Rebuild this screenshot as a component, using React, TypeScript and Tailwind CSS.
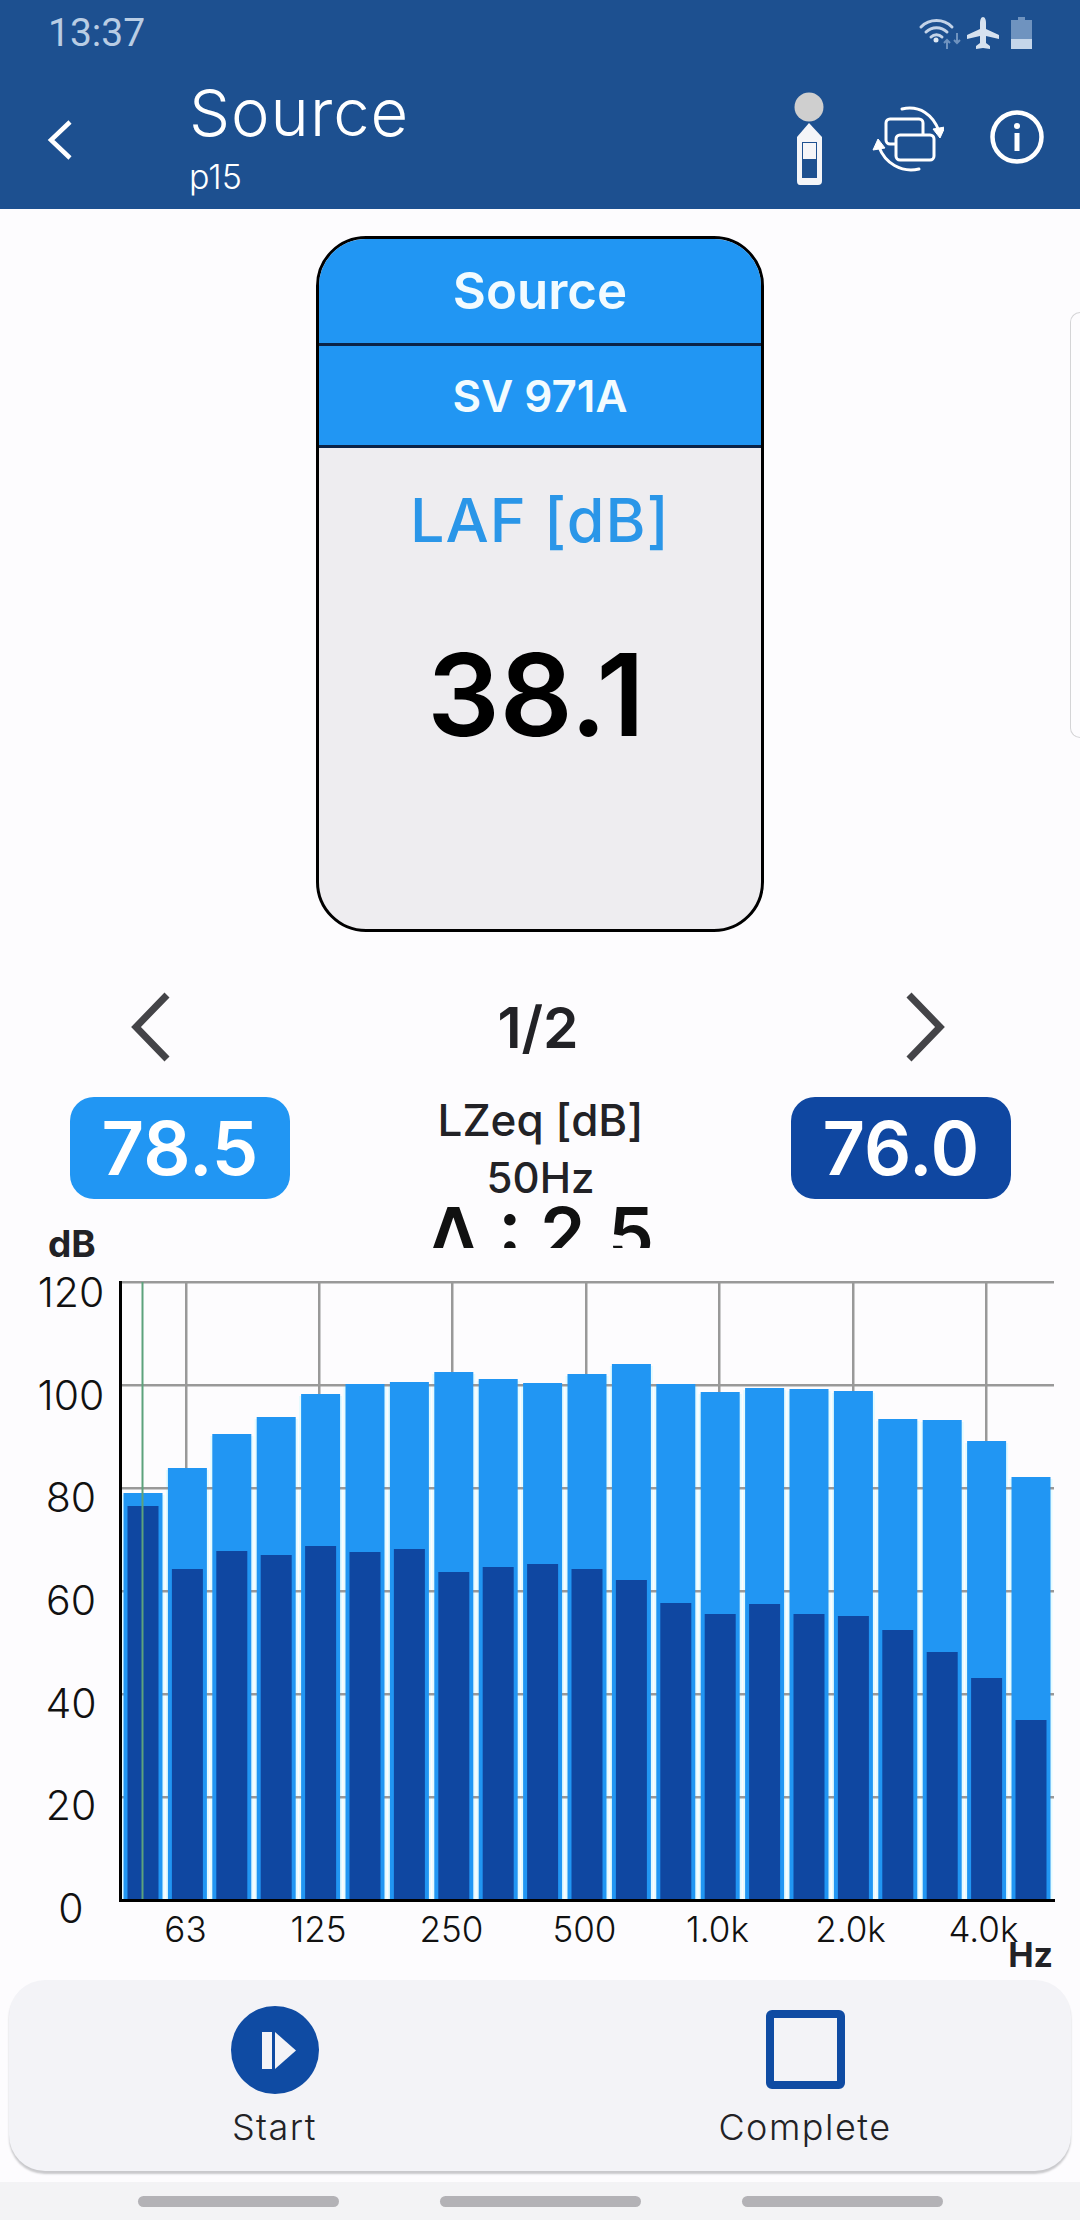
const FONT = "font-['Inter','Noto_Sans',sans-serif]"

// tops of the bars in chart pixels, [light, dark]
const bars = [
  [1493, 1506], [1468, 1569], [1434, 1551], [1417, 1555], [1394, 1546], [1384, 1552], [1382, 1549],
  [1372, 1572], [1379, 1567], [1383, 1564], [1374, 1569], [1364, 1580], [1384, 1603], [1392, 1614],
  [1388, 1604], [1389, 1614], [1391, 1616], [1419, 1630], [1420, 1652], [1441, 1678], [1477, 1720]
]

const yLabels = ['120', '100', '80', '60', '40', '20', '0']
const xLabels = ['63', '125', '250', '500', '1.0k', '2.0k', '4.0k']
const gridY = [1282, 1385, 1488, 1591, 1694, 1797]
const gridX = [186, 319, 452, 586, 719, 853, 986]
const BASE = 1900

const StatusIcons = () => (
  <svg width="120" height="40" viewBox="915 12 120 40" className="block">
    <g fill="none" stroke="#c3d3e8" strokeWidth="3" strokeLinecap="round">
      <path d="M921 26a22 22 0 0 1 31 0" />
      <path d="M926 31a15 15 0 0 1 21 0" />
      <path d="M931 36a8 8 0 0 1 11 0" />
    </g>
    <circle cx="936" cy="39" r="2.5" fill="#dfe8f3" />
    <path d="M947 48v-9m-3 3 3-3 3 3M957 32v10m-3-3 3 3 3-3" fill="none" stroke="#6f93bf" strokeWidth="2" />
    <path
      d="M983 16c2 0 3 3 3 6v6l13 6v4l-13-3v7l4 3v3l-7-1-7 1v-3l4-3v-7l-13 3v-4l13-6v-6c0-3 1-6 3-6z"
      fill="#d7e2ef"
    />
    <path d="M1018 16h7v3h7v19h-21V19h7z" fill="#6f93bf" />
    <rect x="1011" y="38" width="21" height="10" fill="#c5d6ea" />
  </svg>
)

const MeterIcon = () => (
  <svg width="34" height="100" viewBox="792 88 34 100" className="block">
    <circle cx="809" cy="105" r="14.5" fill="#cfcfcf" />
    <path d="M809 121l13 14v44q0 4-4 4h-18q-3 0-3-4v-44z" fill="#f4f5f8" />
    <rect x="802" y="140" width="15" height="36" fill="#1d5090" />
    <rect x="803" y="141" width="13" height="16" fill="#f4f5f8" />
  </svg>
)

const RotateIcon = () => (
  <svg width="72" height="72" viewBox="870 100 72 72" fill="none" stroke="#fff" className="block">
    <rect x="884" y="117" width="37" height="25" rx="4" strokeWidth="3" />
    <rect x="894" y="133" width="38" height="25" rx="4" strokeWidth="3" fill="#1d5090" />
    <path d="M900 107c18-4 31 6 37 22M917 167c-18 4-34-6-40-22" strokeWidth="3" strokeLinecap="round" />
    <path d="M931 127l12-2-5 11zM883 146l-12 2 5-11z" fill="#fff" strokeWidth="1" />
  </svg>
)

const InfoIcon = () => (
  <svg width="56" height="56" viewBox="989 108 56 56" className="block">
    <circle cx="1017" cy="136" r="24.5" fill="none" stroke="#fff" strokeWidth="4.5" />
    <circle cx="1017" cy="125" r="3" fill="#fff" />
    <rect x="1014.5" y="132" width="5" height="18" fill="#fff" />
  </svg>
)

const Header = () => (
  <div className="h-[209px] bg-[#1d5090]">
    <div className="flex h-[66px] items-center justify-between pl-[48px] pr-[45px]">
      <span className="font-['Roboto',sans-serif] text-[39px] leading-none text-[#b9cde4]">13:37</span>
      <StatusIcons />
    </div>
    <div className="flex items-center pt-[18px]">
      <svg width="28" height="40" viewBox="0 0 28 40" className="ml-[46px]">
        <path d="M24 2 5 20l19 18" fill="none" stroke="#fff" strokeWidth="4.5" />
      </svg>
      <div className={`ml-[115px] self-start ${FONT} text-white`}>
        <div className="mt-[-4px] text-[65px] font-light leading-[66px] tracking-[1px]">Source</div>
        <div className="mt-[13px] text-[34px] font-light leading-[36px]">p15</div>
      </div>
      <div className="ml-auto flex items-center">
        <MeterIcon />
        <div className="ml-[46px] mt-[-4px]"><RotateIcon /></div>
        <div className="ml-[45px] mr-[35px] mt-[-6px]"><InfoIcon /></div>
      </div>
    </div>
  </div>
)

const SourceCard = () => (
  <div className={`mx-auto mt-[27px] flex h-[696px] w-[448px] flex-col overflow-hidden rounded-[50px] border-[3px] border-black bg-[#eeedf0] ${FONT}`}>
    <div className="flex h-[107px] items-center justify-center border-b-[3px] border-[#0b2347] bg-[#2196f3] text-[51px] font-semibold text-[#f2fbff]">
      Source
    </div>
    <div className="flex h-[102px] items-center justify-center border-b-[3px] border-[#0b2347] bg-[#2196f3] text-[44px] font-semibold text-[#f2fbff]">
      SV 971A
    </div>
    <div className="flex flex-col items-center">
      <div className="mt-[37px] text-[61px] font-medium leading-[70px] tracking-[1px] text-[#2a96e8]">LAF [dB]</div>
      <div className="mr-[8px] mt-[75px] text-[114px] font-semibold leading-[130px] text-black">38.1</div>
    </div>
  </div>
)

const Chevron = ({ flip }: { flip?: boolean }) => (
  <svg width="40" height="70" viewBox="0 0 40 70" className={flip ? 'rotate-180' : ''}>
    <path d="M36 3 5 35l31 32" fill="none" stroke="#444448" strokeWidth="7" />
  </svg>
)

const Pager = () => (
  <div className={`mt-[58px] flex h-[74px] items-center justify-between pl-[131px] pr-[135px] ${FONT}`}>
    <Chevron />
    <span className="text-[57px] font-semibold leading-none text-[#222226]">1/2</span>
    <Chevron flip />
  </div>
)

const Readout = () => (
  <div className={`mt-[33px] flex h-[165px] items-start justify-between pl-[48px] pr-[69px] ${FONT}`}>
    <div className="flex h-[165px] w-[242px] flex-col">
      <div className="ml-[22px] flex h-[102px] w-[220px] items-center justify-center rounded-[24px] bg-[#2196f3] text-[74px] font-semibold leading-none text-white">
        78.5
      </div>
      <div className="mt-auto text-[37px] font-bold leading-[36px] text-[#222226]">dB</div>
    </div>
    <div className="flex w-[300px] flex-col items-center text-[#222226]">
      <div className="text-[44px] font-medium leading-[47px]">LZeq [dB]</div>
      <div className="mt-[11px] text-[42px] font-medium leading-[46px]">50Hz</div>
      {/* the delta line is clipped on the device too */}
      <div className="mt-[4px] h-[43px] overflow-hidden text-[73px] font-semibold leading-[58px] text-[#111]">Δ : 2.5</div>
    </div>
    <div className="flex h-[102px] w-[220px] items-center justify-center rounded-[24px] bg-[#0f47a1] text-[74px] font-semibold leading-none text-white">
      76.0
    </div>
  </div>
)

const BarChart = () => (
  <svg width="941" height="624" viewBox="119 1280 941 624" className="mt-[18px] block shrink-0">
    {bars.map(([top], i) => (
      <rect key={i} x={121.5 + i * 44.4} y={top + 2} width={43} height={BASE - top - 2} fill="#e4fbff" />
    ))}
    {gridY.map(y => <rect key={y} x={120} y={y - 1} width={934} height={2.5} fill="#999999" />)}
    {gridX.map(x => <rect key={x} x={x - 1} y={1282} width={2.5} height={BASE - 1282} fill="#999999" />)}
    {bars.map(([top, dark], i) => (
      <g key={i}>
        <rect x={123.5 + i * 44.4} y={top} width={39} height={BASE - top} fill="#2196f3" />
        <rect x={127.5 + i * 44.4} y={dark} width={31} height={BASE - dark} fill="#0f47a1" />
      </g>
    ))}
    <rect x={141.5} y={1282} width={2} height={BASE - 1282} fill="#5da27c" />
    <rect x={119} y={1281} width={3} height={621} fill="#000" />
    <rect x={119} y={1899} width={936} height={3} fill="#000" />
  </svg>
)

const Chart = () => (
  <div className={FONT}>
    <div className="flex">
      <div className="mt-[9px] flex h-[658px] w-[119px] shrink-0 flex-col justify-between text-[41px] font-light leading-[42px] text-[#111]">
        {yLabels.map(label => (
          <div key={label} className="pl-[23px] text-center">{label}</div>
        ))}
      </div>
      <BarChart />
    </div>
    <div className="mt-[-20px] flex pl-[119px] text-[35px] font-light leading-[40px] text-[#111]">
      {xLabels.map(label => (
        <div key={label} className="w-[133px] shrink-0 text-center">{label}</div>
      ))}
    </div>
    <div className="mt-[-12px] pr-[27px] text-right text-[34px] font-bold leading-[36px] text-[#222226]">Hz</div>
  </div>
)

const BottomPanel = () => (
  <div className={`mx-[9px] mt-[7px] flex h-[191px] rounded-[36px] bg-[#f3f3f7] shadow-[0_3px_2px_#c9c9cc] ${FONT}`}>
    <div className="flex w-[531px] flex-col items-center">
      <svg width="88" height="88" viewBox="231 2007 88 88" className="mt-[26px]">
        <circle cx="275" cy="2051" r="44" fill="#0f4ba3" />
        <rect x="262" y="2033" width="10" height="37" fill="#f3f3f7" />
        <path d="M275 2033l21 18.500-21 18.500z" fill="#f3f3f7" />
      </svg>
      <span className="mt-[12px] text-[36px] font-light leading-[42px] tracking-[1.5px] text-[#222226]">Start</span>
    </div>
    <div className="flex w-[530px] flex-col items-center">
      <div className="mt-[30px] size-[79px] rounded-[6px] border-[8px] border-[#0f4ba3]" />
      <span className="mt-[17px] text-[36px] font-light leading-[42px] tracking-[1.5px] text-[#222226]">Complete</span>
    </div>
  </div>
)

const NavBar = () => (
  <div className="mt-[11px] flex h-[39px] justify-center gap-[101px] bg-[#f3f3f5] pt-[14px]">
    <div className="h-[11px] w-[201px] rounded-full bg-[#b3b2b6]" />
    <div className="h-[11px] w-[201px] rounded-full bg-[#b3b2b6]" />
    <div className="h-[11px] w-[201px] rounded-full bg-[#b3b2b6]" />
  </div>
)

export default function App() {
  return (
    <div className="relative h-[2220px] w-[1080px] overflow-hidden bg-[#fdfcfe]">
      <Header />
      <SourceCard />
      <Pager />
      <Readout />
      <Chart />
      <BottomPanel />
      <NavBar />
      <div className="absolute right-0 top-[312px] h-[426px] w-[10px] rounded-l-[12px] border border-r-0 border-[#d4d4d6] bg-[#fdfcfe]" />
    </div>
  )
}
